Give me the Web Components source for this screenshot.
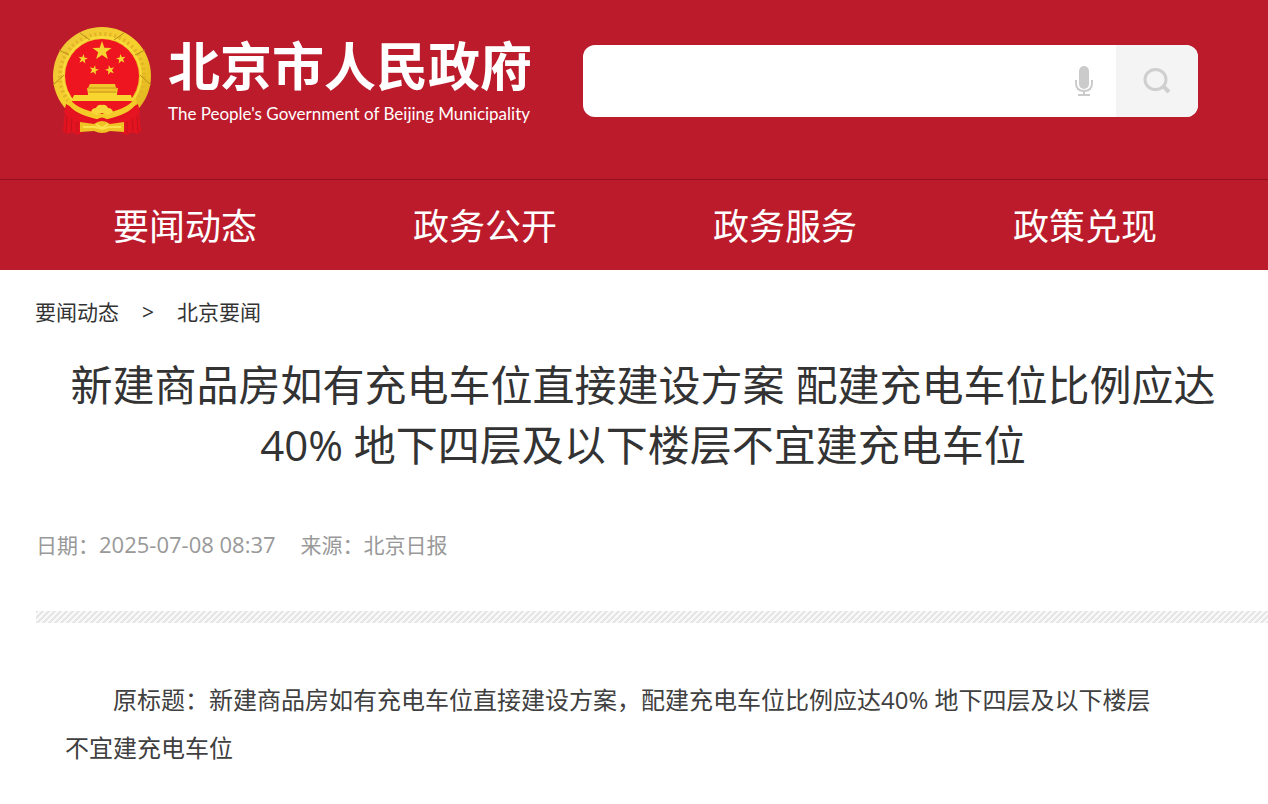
<!DOCTYPE html>
<html lang="zh-CN">
<head>
<meta charset="utf-8">
<meta name="viewport" content="width=device-width, initial-scale=1">
<title>北京市人民政府</title>
<style>
body{
  margin:0;
  background:#fff;
  color:#333;
  font-family:"Open Sans","Noto Sans CJK SC",sans-serif;
}
</style>
</head>
<body>

<site-header>
  <site-logo slot="logo" name="北京市人民政府" subtitle="The People's Government of Beijing Municipality"></site-logo>
  <search-box slot="search" label="搜索"></search-box>
</site-header>

<site-nav>
  <nav-item href="#news">要闻动态</nav-item>
  <nav-item href="#open">政务公开</nav-item>
  <nav-item href="#service">政务服务</nav-item>
  <nav-item href="#policy">政策兑现</nav-item>
</site-nav>

<main>
  <bread-crumb>
    <crumb-link href="#news">要闻动态</crumb-link>
    <crumb-link href="#beijing">北京要闻</crumb-link>
  </bread-crumb>
  <news-article date="2025-07-08 08:37" source="北京日报">
    <span slot="title">新建商品房如有充电车位直接建设方案 配建充电车位比例应达40% 地下四层及以下楼层不宜建充电车位</span>
    原标题：新建商品房如有充电车位直接建设方案，配建充电车位比例应达40% 地下四层及以下楼层不宜建充电车位
  </news-article>
</main>

<script>
function makeTemplate(html) {
  const template = document.createElement("template");
  template.innerHTML = html;
  return template;
}

class BaseElement extends HTMLElement {
  constructor() {
    super();
    this.attachShadow({ mode: "open" });
    this.shadowRoot.appendChild(this.constructor.template.content.cloneNode(true));
  }

  fill(selector, attribute) {
    this.shadowRoot.querySelector(selector).textContent = this.getAttribute(attribute);
  }
}

class SiteHeader extends BaseElement {
  static template = makeTemplate(`
<style>
:host{
  display:block;
  background:#bc1b2c;
}
header{
  display:flex;
  align-items:flex-start;
  gap:51px;
  padding:24px 70px 43px 52px;
}
.search{
  flex:1;
  padding-top:21px;
}
</style>
<header>
  <slot name="logo"></slot>
  <div class="search"><slot name="search"></slot></div>
</header>
`);
}

class NationalEmblem extends BaseElement {
  static template = makeTemplate(`
<style>
:host{ display:block; }
svg{
  display:block;
  width:100px;
  height:112px;
}
</style>
<svg viewBox="0 0 100 112" aria-hidden="true">
  <defs>
    <polygon id="star" points="0,-10 2.3,-3.2 9.5,-3.1 3.8,1.2 5.9,8.1 0,4 -5.9,8.1 -3.8,1.2 -9.5,-3.1 -2.3,-3.2"/>
    <linearGradient id="gold" x1="0" y1="0" x2="1" y2="1">
      <stop offset="0" stop-color="#eec43a"/>
      <stop offset=".5" stop-color="#f6d02c"/>
      <stop offset="1" stop-color="#dcae1c"/>
    </linearGradient>
  </defs>
  <circle cx="50" cy="52" r="49" fill="url(#gold)"/>
  <circle cx="50" cy="52" r="42" fill="none" stroke="#e3b526" stroke-width="4" stroke-dasharray="2 3"/>
  <circle cx="50" cy="52" r="39" fill="none" stroke="#f9dc3c" stroke-width="2"/>
  <g fill="none" stroke="#b98a1a" stroke-width="1">
    <path d="M1 61 12 51M99 61 88 51M7 26l10 5M93 26l-10 5M28 9l10 7M72 9l-10 7"/>
  </g>
  <circle cx="50" cy="52" r="37" fill="#ee1520"/>
  <g fill="#f7d330">
    <use href="#star" transform="translate(50 27)"/>
    <use href="#star" transform="translate(31 35) rotate(8) scale(.5)"/>
    <use href="#star" transform="translate(69 35) rotate(-8) scale(.5)"/>
    <use href="#star" transform="translate(42 46) rotate(14) scale(.5)"/>
    <use href="#star" transform="translate(58 46) rotate(-14) scale(.5)"/>
  </g>
  <path d="M38 60h25l1 4H36zM35 64h31l-1 6H36z" fill="#f0c62a"/>
  <path d="M36 64h29M37 68h27" stroke="#c99616"/>
  <path d="M22 71h14v-2h29v2h14l2 7H19z" fill="#f8d62f"/>
  <!-- red sash and its two tails -->
  <path d="M14 80 11 107l4 3 5-2 5 3 5-2V98q20-5 40 0v11l5 2 5-3 5 2 4-3-3-27-16 9H30z" fill="#e3131f"/>
  <path d="M15 92l-1 16M20 94l-1 13M25 96v13M85 92l1 16M80 94l1 13M75 96v13" stroke="#c01220"/>
  <path d="M19 77h62l-7 8q-12 6-24 6-13 0-24-6z" fill="#ee1520"/>
  <path d="M17 73q5 12 33 17 28-5 33-17l2 5q-6 13-35 18-29-5-35-18z" fill="#f3ca28"/>
  <path d="M39 88q1-4 5-4 2-4 6-3 4-1 6 3 4 0 5 4l-5 3-6-2-6 2z" fill="#f8d538"/>
  <path d="M14 81q10 14 30 15 6-5 12 0 20-1 30-15l2 7q-9 11-23 12H35Q21 99 12 88z" fill="#e51420"/>
  <path d="M28 98l14 2q8-6 16 0l14-2v10l-14-1q-8 4-16 0l-14 1z" fill="#efc324"/>
  <path d="M31 103l12 0 7 2 7-2 12 0M44 100l6 4 6-4" fill="none" stroke="#fbe04a" stroke-width="2"/>
</svg>
`);
}

class SiteLogo extends BaseElement {
  static template = makeTemplate(`
<style>
:host{ display:block; }
a{
  display:flex;
  gap:16px;
  color:#fff;
  text-decoration:none;
  white-space:nowrap;
}
.name{
  padding-top:12px;
}
strong, span{
  display:block;
}
strong{
  font-size:52px;
  line-height:60px;
}
span{
  font-family:Lato,sans-serif;
  font-size:17px;
  line-height:36px;
}
</style>
<a href="#home">
  <national-emblem></national-emblem>
  <div class="name">
    <strong></strong>
    <span></span>
  </div>
</a>
`);

  connectedCallback() {
    this.fill("strong", "name");
    this.fill("span", "subtitle");
  }
}

class SearchBox extends BaseElement {
  static template = makeTemplate(`
<style>
:host{ display:block; }
form{
  display:flex;
  height:72px;
  border-radius:12px;
  overflow:hidden;
  background:#fff;
}
input, button{
  border:0;
  margin:0;
  padding:0;
  background:none;
}
input{
  flex:1;
  min-width:0;
  padding:0 20px;
  font:24px "Open Sans","Noto Sans CJK SC",sans-serif;
  outline:none;
}
button{
  display:flex;
  align-items:center;
  justify-content:center;
  cursor:pointer;
}
.voice{
  width:64px;
}
.submit{
  width:82px;
  background:#f4f4f4;
}
</style>
<form>
  <input type="text">
  <button class="voice" type="button" aria-label="语音">
    <svg width="20" height="32" viewBox="0 0 20 32" fill="none" stroke="#cbcbcb" stroke-width="2">
      <rect x="5" y="1" width="10" height="23" rx="5" fill="#cbcbcb" stroke="none"/>
      <path d="M2 15v3c0 5 3 8 8 8s8-3 8-8v-3M10 26v4M4 30h12"/>
    </svg>
  </button>
  <button class="submit" type="submit" aria-label="搜索">
    <svg width="28" height="28" viewBox="0 0 28 28" fill="none" stroke="#cfcfcf" stroke-width="3">
      <ellipse cx="12.500" cy="12.500" rx="10.500" ry="10"/>
      <path d="M20 19l6 6" stroke-width="4"/>
    </svg>
  </button>
</form>
`);

  connectedCallback() {
    this.shadowRoot.querySelector("input").setAttribute("aria-label", this.getAttribute("label"));
    this.shadowRoot.querySelector("form").addEventListener("submit", (e) => e.preventDefault());
  }
}

class SiteNav extends BaseElement {
  static template = makeTemplate(`
<style>
:host{
  display:block;
  background:#bc1b2c;
  border-top:1px solid #940f20;
}
nav{
  display:grid;
  grid-template-columns:repeat(4, 1fr);
  padding:4px 33px 0 35px;
}
</style>
<nav><slot></slot></nav>
`);
}

class NavItem extends BaseElement {
  static template = makeTemplate(`
<style>
:host{
  display:block;
  text-align:center;
}
a{
  display:block;
  color:#fff;
  font-size:36px;
  line-height:86px;
  text-decoration:none;
  white-space:nowrap;
}
</style>
<a><slot></slot></a>
`);

  connectedCallback() {
    this.shadowRoot.querySelector("a").href = this.getAttribute("href");
  }
}

class BreadCrumb extends BaseElement {
  static template = makeTemplate(`
<style>
:host{
  display:block;
  padding:27px 35px 0;
}
nav{
  display:flex;
}
</style>
<nav><slot></slot></nav>
`);
}

class CrumbLink extends BaseElement {
  static template = makeTemplate(`
<style>
:host{
  display:flex;
  font-size:21px;
  line-height:30px;
}
:host(:not(:last-child))::after{
  content:">";
  padding:0 23px;
}
a{
  color:#333;
  text-decoration:none;
}
</style>
<a><slot></slot></a>
`);

  connectedCallback() {
    this.shadowRoot.querySelector("a").href = this.getAttribute("href");
  }
}

class NewsArticle extends BaseElement {
  static template = makeTemplate(`
<style>
:host{ display:block; }
article{
  padding-left:36px;
}
h1{
  margin:0;
  padding:28px 18px 55px 0;
  font-size:42px;
  font-weight:400;
  line-height:60px;
  text-align:center;
}
.meta{
  display:flex;
  gap:25px;
  color:#999;
  font-size:21px;
  line-height:30px;
}
time{
  font-size:22px;
  line-height:1;
}
.line{
  height:12px;
  margin-top:51px;
  background:linear-gradient(135deg, #e6e6e6 25%, #f9f9f9 25% 50%, #e6e6e6 50% 75%, #f9f9f9 75%);
  background-size:6px 6px;
}
p{
  margin:0;
  padding:53px 100px 30px 29px;
  color:#404040;
  font-size:24px;
  line-height:48px;
  text-indent:48px;
}
</style>
<article>
  <h1><slot name="title"></slot></h1>
  <div class="meta">
    <span>日期：<time></time></span>
    <span>来源：<span class="source"></span></span>
  </div>
  <div class="line"></div>
  <p><slot></slot></p>
</article>
`);

  connectedCallback() {
    this.fill("time", "date");
    this.fill(".source", "source");
  }
}

customElements.define("national-emblem", NationalEmblem);
customElements.define("site-logo", SiteLogo);
customElements.define("search-box", SearchBox);
customElements.define("site-header", SiteHeader);
customElements.define("nav-item", NavItem);
customElements.define("site-nav", SiteNav);
customElements.define("crumb-link", CrumbLink);
customElements.define("bread-crumb", BreadCrumb);
customElements.define("news-article", NewsArticle);
</script>
</body>
</html>
